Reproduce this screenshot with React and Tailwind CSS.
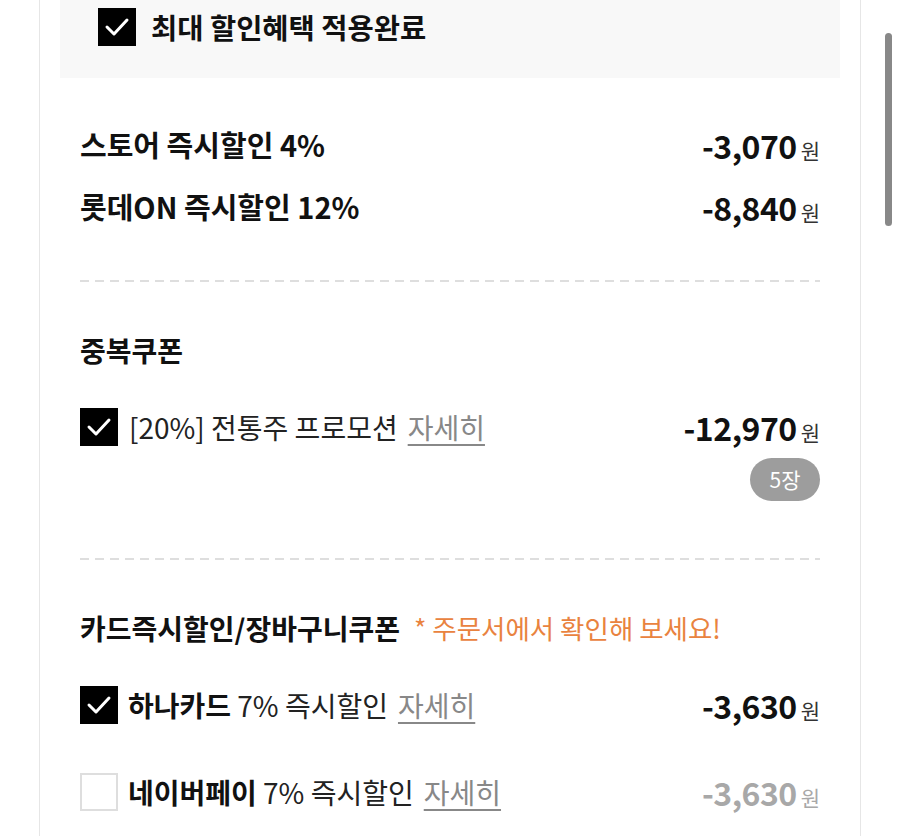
/* 할인 내역 패널 — 최대 할인혜택 / 즉시할인 / 중복쿠폰 / 카드즉시할인 */

const FONT = { fontFamily: '"Noto Sans CJK KR", "Noto Sans", sans-serif' }

function Check({ on }) {
  if (!on) {
    return <span className="w-[38px] h-[38px] shrink-0 border-2 border-[#dedede] bg-white" />
  }
  return (
    <span className="w-[38px] h-[38px] shrink-0 bg-black flex items-center justify-center">
      <svg width="26" height="26" viewBox="0 0 26 26" fill="none">
        <polyline points="3,13 10,20 23,6" stroke="#fff" strokeWidth="3" strokeLinecap="round" strokeLinejoin="round" />
      </svg>
    </span>
  )
}

function Price({ value, muted = false }) {
  return (
    <div className="flex items-baseline gap-1 shrink-0">
      <span className={`text-[32px] font-bold tracking-[-0.5px] ${muted ? 'text-[#a8a8a8]' : 'text-[#111]'}`}>{value}</span>
      <span className={`text-[21px] ${muted ? 'text-[#a8a8a8]' : 'text-[#333]'}`}>원</span>
    </div>
  )
}

function More() {
  return <span className="text-[#888] underline underline-offset-[5px] decoration-[1.5px] ml-2.5">자세히</span>
}

function Dashed() {
  return <div className="h-[2px] w-full bg-[repeating-linear-gradient(to_right,#dedede_0_9px,transparent_9px_15px)]" />
}

export default function App() {
  return (
    <div className="relative w-[900px] h-[836px] bg-white overflow-hidden" style={FONT}>
      <div className="ml-[39px] w-[822px] h-full border-x border-[#e6e6e6]">
        {/* 상단 — 최대 할인 적용 */}
        <div className="mx-5 h-[78px] bg-[#f8f8f8] pt-2 pl-[38px]">
          <div className="flex items-center gap-[15px] h-[38px]">
            <Check on />
            <span className="text-[28.5px] font-bold text-[#111]">최대 할인혜택 적용완료</span>
          </div>
        </div>

        <div className="px-10">
          <div className="pt-[36px]">
            <div className="h-[62px] flex items-center justify-between">
              <span className="text-[29px] font-bold text-[#111]">스토어 즉시할인 4%</span>
              <Price value="-3,070" />
            </div>
            <div className="h-[62px] flex items-center justify-between">
              <span className="text-[29px] font-bold text-[#111]">롯데ON 즉시할인 12%</span>
              <Price value="-8,840" />
            </div>
          </div>

          <div className="mt-[42px]"><Dashed /></div>

          {/* 중복쿠폰 */}
          <div className="mt-[48px] h-10 flex items-center text-[28px] font-bold text-[#111]">중복쿠폰</div>
          <div className="mt-[32px] h-[50px] flex items-center justify-between">
            <div className="flex items-center gap-[11px] text-[28px] text-[#222]">
              <Check on />
              <span>[20%] 전통주 프로모션<More /></span>
            </div>
            <Price value="-12,970" />
          </div>
          <div className="mt-1.5 flex justify-end">
            <span className="w-[70px] h-[43px] rounded-full bg-[#9d9d9d] text-white text-[21px] flex items-center justify-center">5장</span>
          </div>

          <div className="mt-[57px]"><Dashed /></div>

          {/* 카드즉시할인 */}
          <div className="mt-[48px] h-10 flex items-center gap-3.5">
            <span className="text-[28px] font-bold text-[#111]">카드즉시할인/장바구니쿠폰</span>
            <span className="text-[26.5px] text-[#e9833f]">* 주문서에서 확인해 보세요!</span>
          </div>
          <div className="mt-[32px] h-[50px] flex items-center justify-between">
            <div className="flex items-center gap-[10px] text-[28px] text-[#222]">
              <Check on />
              <span><b className="font-bold text-[#111]">하나카드</b> 7% 즉시할인<More /></span>
            </div>
            <Price value="-3,630" />
          </div>
          <div className="mt-[37px] h-[50px] flex items-center justify-between">
            <div className="flex items-center gap-[10px] text-[28px] text-[#222]">
              <Check on={false} />
              <span><b className="font-bold text-[#111]">네이버페이</b> 7% 즉시할인<More /></span>
            </div>
            <Price value="-3,630" muted />
          </div>
        </div>
      </div>

      {/* 스크롤바 */}
      <div className="absolute left-[885px] top-[33px] w-[7px] h-[193px] rounded-full bg-[#888]" />
    </div>
  )
}
